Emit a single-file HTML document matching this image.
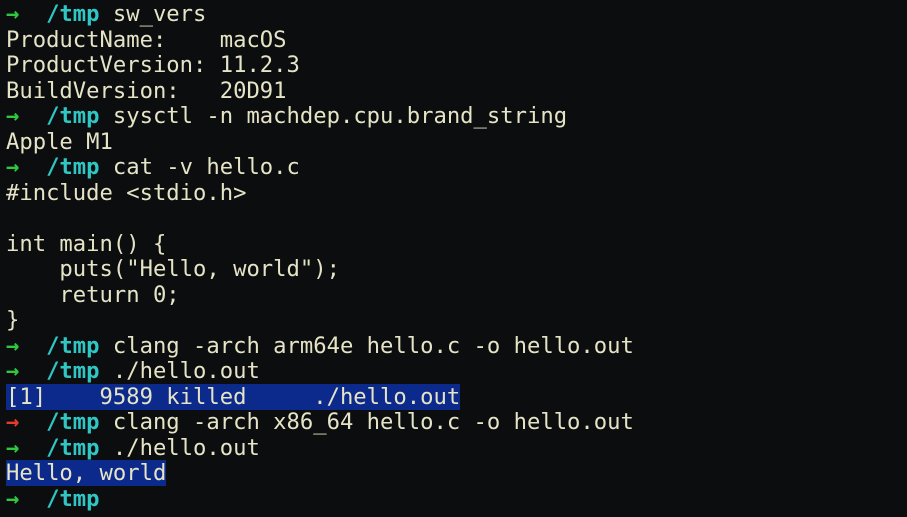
<!DOCTYPE html>
<html><head><meta charset="utf-8"><style>
html,body{margin:0;padding:0;background:#0b0d0f;width:907px;height:517px;overflow:hidden}
pre{margin:0;padding:2px 0 0 6px;font-family:"DejaVu Sans Mono","Liberation Mono",monospace;font-size:22.2px;line-height:25.5px;color:#e6e4c6;white-space:pre}
.g{color:#2fc940;font-weight:bold}.r{color:#e53a30;font-weight:bold}.c{color:#2fc6c4;font-weight:bold}
.h{background:#0c2a8c}
</style></head><body>
<pre><span class="g">→</span>  <span class="c">/tmp</span> sw_vers
ProductName:    macOS
ProductVersion: 11.2.3
BuildVersion:   20D91
<span class="g">→</span>  <span class="c">/tmp</span> sysctl -n machdep.cpu.brand_string
Apple M1
<span class="g">→</span>  <span class="c">/tmp</span> cat -v hello.c
#include &lt;stdio.h&gt;

int main() {
    puts("Hello, world");
    return 0;
}
<span class="g">→</span>  <span class="c">/tmp</span> clang -arch arm64e hello.c -o hello.out
<span class="g">→</span>  <span class="c">/tmp</span> ./hello.out
<span class="h">[1]    9589 killed     ./hello.out</span>
<span class="r">→</span>  <span class="c">/tmp</span> clang -arch x86_64 hello.c -o hello.out
<span class="g">→</span>  <span class="c">/tmp</span> ./hello.out
<span class="h">Hello, world</span>
<span class="g">→</span>  <span class="c">/tmp</span></pre>
</body></html>
